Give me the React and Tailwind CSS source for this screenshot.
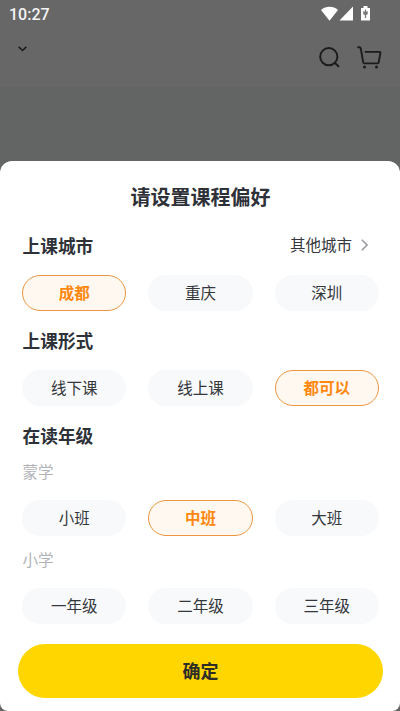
import React from 'react';

function StatusBar() {
  return (
    <div className="flex h-[27px] items-center justify-between pr-[29px] pl-[9px]">
      <span className="mt-[2px] font-['Roboto',sans-serif] text-[16px] leading-none font-medium text-[#f4f4f4]">10:27</span>
      <svg width="50" height="16" viewBox="0 0 50 16" fill="#fff">
        <path d="M0 4C5-.200 12.200-.200 17 4L8.500 14.700Z" />
        <path d="M32 .500v14H18.500Z" />
        <path d="M40 2h2.500V0h4v2H49v12.500h-9Z" />
        <path d="M43.900 3.500h1.200v2.300l1.600-.8v3.300l-1.600.8V12h-1.200V9.100l-1.600-.8V5l1.600.8Z" fill="#777" />
      </svg>
    </div>
  );
}

function TopBar() {
  return (
    <div className="flex h-[60px] items-start justify-between pr-[18px] pl-[18px]">
      <svg width="9" height="6" viewBox="0 0 9 6" fill="none" stroke="#1c1c1c" strokeWidth="1.6" className="mt-[19px]">
        <path d="M.7.9 4.500 4.500 8.300.9" />
      </svg>
      <div className="mt-[18px] flex gap-[17px]">
        <svg width="22" height="24" viewBox="0 0 22 24" fill="none" stroke="#1c1c1c" strokeWidth="2" strokeLinecap="round">
          <circle cx="10.800" cy="11.700" r="8.600" />
          <path d="m17 18 3.400 3.300" />
        </svg>
        <svg width="25" height="24" viewBox="0 0 25 24" fill="none" stroke="#1c1c1c" strokeWidth="1.900" strokeLinecap="round" strokeLinejoin="round">
          <path d="M1.200 2.200h1.400q.9 0 1.100 1l2.500 14.200q.2 1 1.200 1h13.100q1 0 1.200-1L23.400 8.100q.2-1.200-1-1.200H8.500" />
          <circle cx="7.500" cy="22" r="1.500" fill="#1c1c1c" stroke="none" />
          <circle cx="19.500" cy="22" r="1.500" fill="#1c1c1c" stroke="none" />
        </svg>
      </div>
    </div>
  );
}

function Heading({ children }) {
  return <h2 className="pl-[0.5px] text-[17.7px] leading-[25px] font-bold text-[#2e3138]">{children}</h2>;
}

function Options({ items, selected, className }) {
  return (
    <div className={`grid grid-cols-3 gap-[22px] ${className}`}>
      {items.map((item) => (
        <button
          key={item}
          type="button"
          className={
            item === selected
              ? 'h-9 rounded-full border border-[#ec9540] bg-[#fff8f0] text-[15.5px] leading-none font-bold text-[#ff8810]'
              : 'h-9 rounded-full bg-[#f8f9fb] text-[15.5px] leading-none text-[#34373c]'
          }
        >
          {item}
        </button>
      ))}
    </div>
  );
}

export default function App() {
  return (
    <div className="flex h-[711px] w-[400px] flex-col overflow-hidden bg-[#636564] font-['Noto_Sans_CJK_SC',sans-serif]">
      <div className="h-[87px] flex-none bg-[#676767]">
        <StatusBar />
        <TopBar />
      </div>

      <div className="mt-[74px] h-[550px] flex-none rounded-t-[12px] rounded-b-[8px] bg-white">
        <h1 className="h-[72px] pl-px text-center text-[20px] leading-[72px] font-bold text-[#2e3138]">请设置课程偏好</h1>

        <div className="pr-[21px] pl-[22px]">
          <div className="flex h-[25px] items-center justify-between pr-[11px]">
            <Heading>上课城市</Heading>
            <div className="flex items-center gap-[9px] text-[15.5px] leading-[25px] text-[#34373c]">
              <span className="-mt-[2px]">其他城市</span>
              <svg width="7" height="12" viewBox="0 0 7 12" fill="none" stroke="#9b9da3" strokeWidth="1.600" className="-mt-px">
                <path d="m.8.8 5.200 5.200-5.200 5.200" />
              </svg>
            </div>
          </div>
          <Options className="mt-[17px]" items={['成都', '重庆', '深圳']} selected="成都" />

          <div className="mt-[17px]">
            <Heading>上课形式</Heading>
          </div>
          <Options className="mt-[17px]" items={['线下课', '线上课', '都可以']} selected="都可以" />

          <div className="mt-[17px]">
            <Heading>在读年级</Heading>
          </div>
          <p className="mt-[13px] pl-[0.5px] text-[15.5px] leading-[20px] text-[#b0b2b7]">蒙学</p>
          <Options className="mt-[19px]" items={['小班', '中班', '大班']} selected="中班" />
          <p className="mt-[13px] pl-[0.5px] text-[15.5px] leading-[20px] text-[#b0b2b7]">小学</p>
          <Options className="mt-[18.5px]" items={['一年级', '二年级', '三年级']} />
        </div>

        <div className="mt-[20.5px] pr-[17px] pl-[18px]">
          <button type="button" className="h-[53.5px] w-full rounded-full bg-[#ffd600] pb-px text-[18px] leading-none font-bold text-[#2e2e26]">
            确定
          </button>
        </div>
      </div>
    </div>
  );
}
